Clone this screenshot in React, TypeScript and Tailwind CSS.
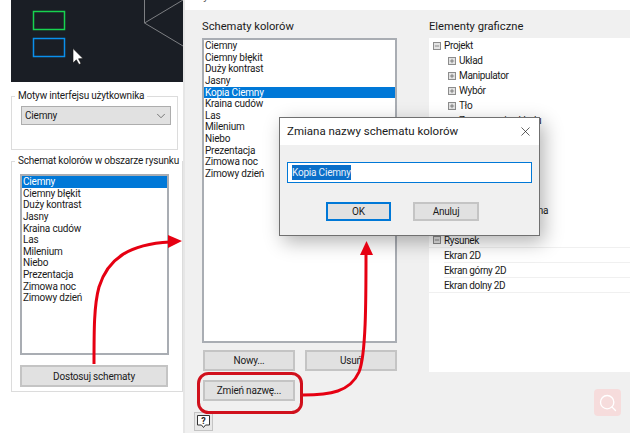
import React from 'react';
import { ChevronDown, Minus, Plus, Search, X } from 'lucide-react';

const leftSchemes = ['Ciemny', 'Ciemny błękit', 'Duży kontrast', 'Jasny', 'Kraina cudów', 'Las', 'Milenium', 'Niebo', 'Prezentacja', 'Zimowa noc', 'Zimowy dzień'];
const rightSchemes = ['Ciemny', 'Ciemny błękit', 'Duży kontrast', 'Jasny', 'Kopia Ciemny', 'Kraina cudów', 'Las', 'Milenium', 'Niebo', 'Prezentacja', 'Zimowa noc', 'Zimowy dzień'];

const SchemeList = ({ items, selected, className }: { items: string[]; selected: string; className: string }) => (
  <div className={`border-2 border-[#a9adb3] bg-white text-[#1a1a1a] ${className}`}>
    {items.map((item) => (
      <div
        key={item}
        className={`h-[11.63px] pl-[1px] leading-[11.63px] whitespace-nowrap ${item === selected ? 'bg-[#0078d7] text-white' : ''}`}
      >
        {item}
      </div>
    ))}
  </div>
);

const GrayButton = ({ label, className }: { label: string; className: string }) => (
  <div className={`flex items-center justify-center border-2 border-[#c4c4c4] bg-[#e1e1e1] text-[#1a1a1a] ${className}`}>
    {label}
  </div>
);

const TreeBox = ({ open }: { open?: boolean }) => (
  <span className="flex h-[8px] w-[8px] shrink-0 items-center justify-center border border-[#8c8c8c] bg-[#e4e4e4] text-[#333]">
    {open ? <Minus size={6} strokeWidth={2} /> : <Plus size={6} strokeWidth={2} />}
  </span>
);

const TreeRow = ({ label, open, line, indent }: { label: string; open?: boolean; line?: boolean; indent: string }) => (
  <div className={`flex h-[15px] items-center gap-[3px] whitespace-nowrap ${indent} ${line ? 'border-b border-[#f0f0f0]' : ''}`}>
    <TreeBox open={open} />
    <span>{label}</span>
  </div>
);

const DrawingRow = ({ label, last }: { label: string; last?: boolean }) => (
  <div className={`h-[15px] border-b border-[#f0f0f0] leading-[15px] whitespace-nowrap ${last ? 'pl-[15px]' : 'ml-[15px]'}`}>{label}</div>
);

export default function App() {
  return (
    <div className="relative flex h-[433px] w-[630px] overflow-hidden bg-white font-['Roboto',sans-serif] text-[10px] tracking-[-0.2px] text-[#1a1a1a]">
      {/* Left options panel */}
      <div className="w-[183px] shrink-0 pl-[11px]">
        <div className="h-[82px] w-[172px] bg-[#1a1e25]">
          <svg width="172" height="82" viewBox="0 0 172 82">
            <rect x="22.5" y="11.5" width="31" height="18" fill="none" stroke="#17d34f" strokeWidth="1.5" />
            <rect x="22.5" y="38.5" width="31" height="18" fill="none" stroke="#0a8fec" strokeWidth="1.5" />
            <path d="M133.5 0V23L172 0M133.5 23L172 46" fill="none" stroke="#7d7f83" strokeWidth="1" />
            <path d="M62 48.5V63L65.3 59.8L68 64.5L70 63.5L67.5 58.8L72 58.5Z" fill="#fff" stroke="#111" strokeWidth="0.6" />
          </svg>
        </div>
        <fieldset className="mt-[7px] h-[61px] w-[167px] border border-[#dcdcdc] pt-[3px] pl-[9px]">
          <legend className="-ml-[6px] px-[3px] leading-[14px] whitespace-nowrap">Motyw interfejsu użytkownika</legend>
          <div className="flex h-[19px] w-[150px] items-center justify-between border border-[#adadad] bg-[#e1e1e1] pr-[2px] pl-[3px]">
            <span>Ciemny</span>
            <ChevronDown size={14} strokeWidth={1.3} className="text-[#555]" />
          </div>
        </fieldset>
        <fieldset className="mt-[4px] h-[238px] w-[167px] border border-[#dcdcdc] pt-[6px] pl-[8px]">
          <legend className="-ml-[5px] px-[3px] leading-[14px] whitespace-nowrap">Schemat kolorów w obszarze rysunku</legend>
          <SchemeList items={leftSchemes} selected="Ciemny" className="h-[181px] w-[149px]" />
          <GrayButton label="Dostosuj schematy" className="mt-[10px] h-[22px] w-[148px]" />
        </fieldset>
      </div>

      {/* Colour schemes dialog */}
      <div className="flex min-w-0 flex-1 flex-col border-l-2 border-[#e6e6e6]">
        <div className="h-[10px] shrink-0 overflow-hidden bg-white pl-[6px] text-[11px] tracking-normal text-[#555]">
          <div className="-mt-[10px] leading-[14px]">Edytor schematu kolorów</div>
        </div>
        <div className="flex-1 bg-[#f0f0f0] pt-[10px] pl-[17px]">
          <div className="flex gap-[32px]">
            <div className="w-[195px] shrink-0">
              <div className="h-[18px] text-[11.2px] leading-[14px] tracking-normal">Schematy kolorów</div>
              <SchemeList items={rightSchemes} selected="Kopia Ciemny" className="h-[305px] w-[195px]" />
              <div className="mt-[7px] ml-[1px] grid grid-cols-2 gap-x-[10px] gap-y-[9px]">
                <GrayButton label="Nowy..." className="h-[21px]" />
                <GrayButton label="Usuń" className="h-[21px]" />
                <GrayButton label="Zmień nazwę..." className="h-[21px]" />
              </div>
              <div className="mt-[11px] -ml-[8px] flex h-[19px] w-[19px] items-center justify-center border border-[#c4c4c4] bg-[#e8e8e8]">
                <svg width="15" height="15" viewBox="0 0 15 15">
                  <path d="M1.5 1.5H13.5V11H9.5L7.5 13.5L5.5 11H1.5Z" fill="#fff" stroke="#333" strokeWidth="1" />
                  <text x="7.5" y="9.5" textAnchor="middle" fontSize="9" fontWeight="700" fill="#222" fontFamily="Roboto, sans-serif">?</text>
                </svg>
              </div>
            </div>
            <div className="min-w-0 flex-1">
              <div className="h-[18px] text-[11.2px] leading-[14px] tracking-normal">Elementy graficzne</div>
              <div className="h-[334px] overflow-hidden bg-white tracking-[-0.35px]">
                <TreeRow label="Projekt" indent="pl-[4px]" open />
                <TreeRow label="Układ" indent="pl-[19px]" />
                <TreeRow label="Manipulator" indent="pl-[19px]" />
                <TreeRow label="Wybór" indent="pl-[19px]" />
                <TreeRow label="Tło" indent="pl-[19px]" />
                <TreeRow label="Zaznaczenie układu" indent="pl-[19px]" />
                <div className="h-[75px]" />
                <TreeRow label="Siatka główna" indent="pl-[50px]" />
                <div className="h-[15px]" />
                <TreeRow label="Rysunek" indent="pl-[4px]" open line />
                <DrawingRow label="Ekran 2D" />
                <DrawingRow label="Ekran górny 2D" />
                <DrawingRow label="Ekran dolny 2D" last />
              </div>
            </div>
          </div>
        </div>
      </div>

      {/* Rename dialog */}
      <div className="absolute top-[117px] left-[279px] h-[119px] w-[261px] border border-[#707070] bg-[#f0f0f0] shadow-[4px_6px_18px_rgba(0,0,0,0.3)]">
        <div className="flex h-[27px] items-center justify-between bg-white pr-[6px] pl-[7px] text-[11.5px] tracking-normal">
          <span>Zmiana nazwy schematu kolorów</span>
          <X size={15} strokeWidth={1.1} />
        </div>
        <div className="mx-[7px] mt-[17px] flex h-[21px] items-center border border-[#0078d7] bg-white pl-[4px]">
          <span className="bg-[#0a6fc9] text-[#e8f1fa]">Kopia Ciemny</span>
        </div>
        <div className="mt-[19px] flex justify-center gap-[22px] pr-[14px]">
          <div className="flex h-[19px] w-[65px] items-center justify-center border-2 border-[#0078d7] bg-[#e1e1e1]">OK</div>
          <div className="flex h-[19px] w-[66px] items-center justify-center border-2 border-[#c4c4c4] bg-[#e1e1e1]">Anuluj</div>
        </div>
      </div>

      {/* Callout arrows */}
      <svg className="pointer-events-none absolute top-0 left-0" width="630" height="433" viewBox="0 0 630 433">
        <path d="M94 364C94 330 94 305 99 287C108 258 130 244 170 242" fill="none" stroke="#e60012" strokeWidth="3" />
        <path d="M168 235L182 241L168 248Z" fill="#e60012" />
        <path d="M303 395C330 395 350 392 359 372C366 355 366 300 366 254" fill="none" stroke="#e60012" strokeWidth="3" />
        <path d="M360 255L366.5 241L373 255Z" fill="#e60012" />
        <rect x="198.5" y="373.5" width="103" height="39" rx="10" fill="none" stroke="#d0101c" strokeWidth="3" />
      </svg>

      {/* Watermark search badge */}
      <div className="absolute top-[389px] left-[594px] flex h-[27px] w-[27px] items-center justify-center rounded-[4px] bg-[#f6dcdc] text-white">
        <Search size={20} strokeWidth={1.6} />
      </div>
    </div>
  );
}
